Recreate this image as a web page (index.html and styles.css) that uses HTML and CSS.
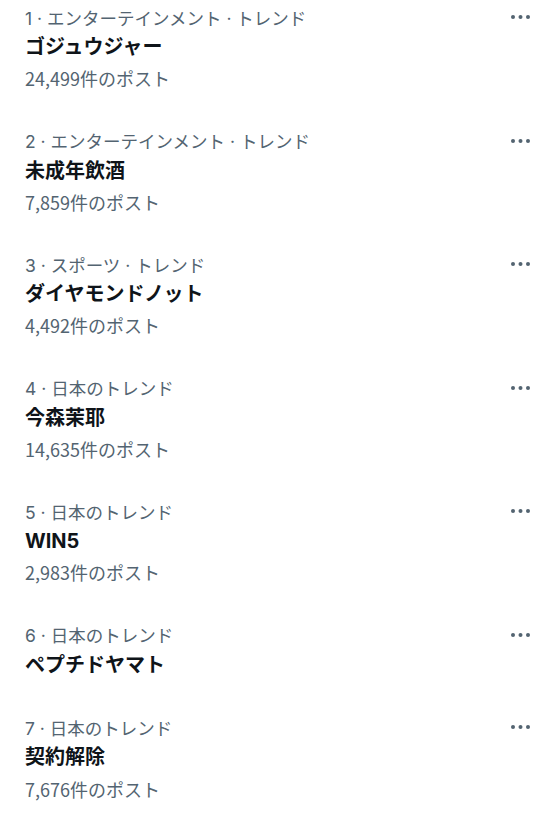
FILE: index.html
```html
<!DOCTYPE html>
<html lang="ja">
<head>
  <meta charset="UTF-8" />
  <meta name="viewport" content="width=device-width, initial-scale=1.0" />
  <title>トレンド</title>
  <link rel="stylesheet" href="styles.css">
</head>
<body>
  <ul class="trends">
    <li class="trend">
      <div class="trend-head">
        <span class="meta">1 · エンターテインメント · トレンド</span>
        <svg class="more" width="20" height="4" viewBox="0 0 20 4"><circle cx="2" cy="2" r="2"/><circle cx="9.5" cy="2" r="2"/><circle cx="17" cy="2" r="2"/></svg>
      </div>
      <div class="title">ゴジュウジャー</div>
      <div class="count">24,499件のポスト</div>
    </li>
    <li class="trend">
      <div class="trend-head">
        <span class="meta">2 · エンターテインメント · トレンド</span>
        <svg class="more" width="20" height="4" viewBox="0 0 20 4"><circle cx="2" cy="2" r="2"/><circle cx="9.5" cy="2" r="2"/><circle cx="17" cy="2" r="2"/></svg>
      </div>
      <div class="title">未成年飲酒</div>
      <div class="count">7,859件のポスト</div>
    </li>
    <li class="trend">
      <div class="trend-head">
        <span class="meta">3 · スポーツ · トレンド</span>
        <svg class="more" width="20" height="4" viewBox="0 0 20 4"><circle cx="2" cy="2" r="2"/><circle cx="9.5" cy="2" r="2"/><circle cx="17" cy="2" r="2"/></svg>
      </div>
      <div class="title">ダイヤモンドノット</div>
      <div class="count">4,492件のポスト</div>
    </li>
    <li class="trend">
      <div class="trend-head">
        <span class="meta">4 · 日本のトレンド</span>
        <svg class="more" width="20" height="4" viewBox="0 0 20 4"><circle cx="2" cy="2" r="2"/><circle cx="9.5" cy="2" r="2"/><circle cx="17" cy="2" r="2"/></svg>
      </div>
      <div class="title">今森茉耶</div>
      <div class="count">14,635件のポスト</div>
    </li>
    <li class="trend">
      <div class="trend-head">
        <span class="meta">5 · 日本のトレンド</span>
        <svg class="more" width="20" height="4" viewBox="0 0 20 4"><circle cx="2" cy="2" r="2"/><circle cx="9.5" cy="2" r="2"/><circle cx="17" cy="2" r="2"/></svg>
      </div>
      <div class="title">WIN5</div>
      <div class="count">2,983件のポスト</div>
    </li>
    <li class="trend">
      <div class="trend-head">
        <span class="meta">6 · 日本のトレンド</span>
        <svg class="more" width="20" height="4" viewBox="0 0 20 4"><circle cx="2" cy="2" r="2"/><circle cx="9.5" cy="2" r="2"/><circle cx="17" cy="2" r="2"/></svg>
      </div>
      <div class="title">ペプチドヤマト</div>
    </li>
    <li class="trend">
      <div class="trend-head">
        <span class="meta">7 · 日本のトレンド</span>
        <svg class="more" width="20" height="4" viewBox="0 0 20 4"><circle cx="2" cy="2" r="2"/><circle cx="9.5" cy="2" r="2"/><circle cx="17" cy="2" r="2"/></svg>
      </div>
      <div class="title">契約解除</div>
      <div class="count">7,676件のポスト</div>
    </li>
  </ul>
</body>
</html>
```

FILE: styles.css
```css
body {
  margin: 0;
  background: #fff;
  font-family: Inter, 'Noto Sans CJK JP', sans-serif;
  color: #0f1419;
}
.trends {
  list-style: none;
  margin: 0;
  padding: 0;
}
.trend {
  padding: 2px 29px 29.5px 25px;
}
.trend:last-child .count {
  margin-top: 1px;
}
.trend-head {
  display: flex;
  justify-content: space-between;
  align-items: center;
  height: 30px;
}
.meta {
  font-size: 17.5px;
  color: #536471;
}
.more {
  fill: #536471;
}
.title {
  font-size: 20px;
  font-weight: 700;
  line-height: 31px;
}
.count {
  font-family: 'Noto Sans CJK JP', sans-serif;
  font-size: 18px;
  color: #536471;
  line-height: 31px;
}
```
